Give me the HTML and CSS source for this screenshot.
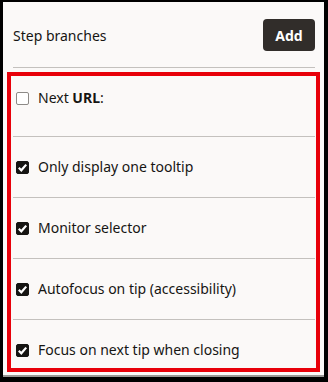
FILE: index.html
```html
<!DOCTYPE html>
<html lang="en">
<head>
    <meta charset="UTF-8">
    <title>Step branches</title>
    <link rel="stylesheet" href="styles.css">
</head>
<body>
    <div class="panel">
        <div class="panel__header">
            <span class="panel__title">Step branches</span>
            <button class="panel__add" type="button">Add</button>
        </div>

        <div class="options">
            <label class="options__item options__item--first">
                <span class="options__box"></span>
                <span class="options__label">Next <b>URL</b>:</span>
            </label>
            <label class="options__item">
                <span class="options__box options__box--checked">
                    <svg viewBox="0 0 13 13" width="13" height="13"><path d="M2.8 6.8 L5.3 9.3 L10.2 3.6" fill="none" stroke="#fff" stroke-width="2.2"/></svg>
                </span>
                <span class="options__label">Only display one tooltip</span>
            </label>
            <label class="options__item">
                <span class="options__box options__box--checked">
                    <svg viewBox="0 0 13 13" width="13" height="13"><path d="M2.8 6.8 L5.3 9.3 L10.2 3.6" fill="none" stroke="#fff" stroke-width="2.2"/></svg>
                </span>
                <span class="options__label">Monitor selector</span>
            </label>
            <label class="options__item">
                <span class="options__box options__box--checked">
                    <svg viewBox="0 0 13 13" width="13" height="13"><path d="M2.8 6.8 L5.3 9.3 L10.2 3.6" fill="none" stroke="#fff" stroke-width="2.2"/></svg>
                </span>
                <span class="options__label">Autofocus on tip (accessibility)</span>
            </label>
            <label class="options__item options__item--last">
                <span class="options__box options__box--checked">
                    <svg viewBox="0 0 13 13" width="13" height="13"><path d="M2.8 6.8 L5.3 9.3 L10.2 3.6" fill="none" stroke="#fff" stroke-width="2.2"/></svg>
                </span>
                <span class="options__label">Focus on next tip when closing</span>
            </label>
        </div>
    </div>
</body>
</html>
```

FILE: styles.css
```css
html {
    background-color: #000;
}

body {
    margin: 0;
    padding: 2px 4px 7px 3px;
    font-family: "Noto Sans", sans-serif;
    color: #161513;
}

.panel {
    background-color: #fbf9f8;
    height: 373px;
    box-shadow: 0 2px 0 #9a9896;
}

.panel__header {
    align-items: center;
    border-bottom: 1px solid #c4c1be;
    display: flex;
    height: 64px;
    justify-content: space-between;
    margin: 0 9px 0 10px;
    padding-top: 1px;
}

.panel__title {
    font-size: 14px;
}

.panel__add {
    background-color: #312d2a;
    border: 0;
    border-radius: 4px;
    color: #fff;
    font-family: "Noto Sans", sans-serif;
    font-size: 14px;
    font-weight: 700;
    height: 32px;
    padding: 0;
    width: 52px;
}

.options {
    border: 4px solid #e8000a;
    margin: 4px 4px 0;
    padding: 0 1px 0 2px;
}

.options__item {
    align-items: center;
    border-bottom: 1px solid #c4c1be;
    display: flex;
    font-size: 14px;
    line-height: 20px;
    padding: 20px 0;
}

.options__item--first {
    padding: 12px 0 28px;
}

.options__item--last {
    border-bottom: 0;
    padding: 20px 0 8px;
}

.options__box {
    border: 1px solid #8d8a87;
    border-radius: 2px;
    box-sizing: border-box;
    display: block;
    height: 13px;
    margin: 0 9px 0 3px;
    width: 13px;
    background-color: #fff;
}

.options__box--checked {
    background-color: #161513;
    border-color: #161513;
}

.options__box svg {
    display: block;
    margin: -1px;
}

.options__label b {
    font-weight: 700;
}
```
